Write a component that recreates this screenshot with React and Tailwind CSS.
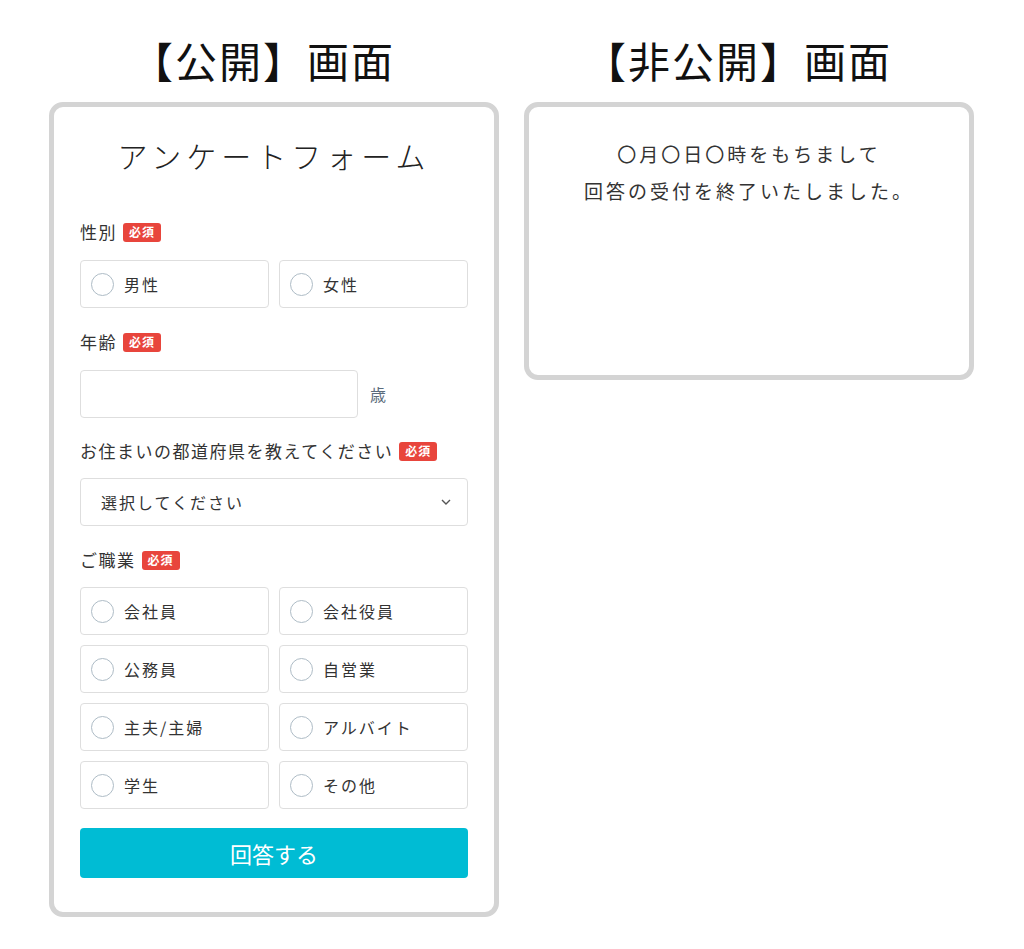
const font = { fontFamily: '"Noto Sans CJK JP", "Noto Sans", sans-serif' };

const Badge = () => (
  <span className="ml-[6px] inline-flex h-[19px] items-center rounded-[3px] bg-[#e8453c] px-[6px] text-[12px] font-bold leading-none tracking-[1px] text-white">
    必須
  </span>
);

const Label = ({ children, className = '' }) => (
  <div className={`flex h-[20px] items-center text-[17px] tracking-[1.5px] text-[#333] ${className}`}>
    {children}
    <Badge />
  </div>
);

const Radio = ({ label }) => (
  <label className="flex h-[48px] items-center gap-[10px] rounded-[4px] border border-[#dedede] bg-white pl-[10px]">
    <span className="h-[23px] w-[23px] shrink-0 rounded-full border-[1.5px] border-[#aebcc6]" />
    <span className="text-[16px] tracking-[2px] text-[#333]">{label}</span>
  </label>
);

const jobs = ['会社員', '会社役員', '公務員', '自営業', '主夫/主婦', 'アルバイト', '学生', 'その他'];

export default function App() {
  return (
    <div className="min-h-screen bg-white" style={font}>
      <div className="flex gap-[25px] pl-[49px] pt-[36px]">
        {/* public */}
        <div className="w-[450px]">
          <h1 className="mb-[18px] pr-[22px] text-center text-[42px] font-normal leading-[48px] tracking-[2px] text-[#111]">【公開】画面</h1>
          <div className="rounded-[14px] border-[5px] border-[#d4d4d4] px-[26px] pb-[34px] pt-[28px]">
            <h2 className="text-center text-[30px] font-light leading-[40px] tracking-[5px] text-[#222]">アンケートフォーム</h2>

            <Label className="mt-[47px]">性別</Label>
            <div className="mt-[18px] grid grid-cols-2 gap-[10px]">
              <Radio label="男性" />
              <Radio label="女性" />
            </div>

            <Label className="mt-[24px]">年齢</Label>
            <div className="mt-[18px] flex items-center gap-[12px]">
              <div className="h-[48px] w-[278px] rounded-[4px] border border-[#dedede]" />
              <span className="text-[16px] text-[#5b6b7b]">歳</span>
            </div>

            <Label className="mt-[23px]">お住まいの都道府県を教えてください</Label>
            <div className="mt-[17px] flex h-[48px] items-center justify-between rounded-[4px] border border-[#dedede] pl-[20px] pr-[16px]">
              <span className="text-[16px] tracking-[2px] text-[#333]">選択してください</span>
              <svg width="10" height="6" viewBox="0 0 10 6" fill="none" stroke="#555" strokeWidth="1.4">
                <path d="M1 1l4 4 4-4" />
              </svg>
            </div>

            <Label className="mt-[24px]">ご職業</Label>
            <div className="mt-[17px] grid grid-cols-2 gap-x-[10px] gap-y-[10px]">
              {jobs.map((j) => (
                <Radio key={j} label={j} />
              ))}
            </div>

            <button className="mt-[19px] h-[50px] w-full rounded-[4px] bg-[#00bcd4] text-[22px] text-white">回答する</button>
          </div>
        </div>

        {/* closed */}
        <div className="w-[450px]">
          <h1 className="mb-[18px] pr-[22px] text-center text-[42px] font-normal leading-[48px] tracking-[2px] text-[#111]">【非公開】画面</h1>
          <div className="h-[278px] rounded-[14px] border-[5px] border-[#d4d4d4] pt-[28px] text-center text-[19px] leading-[37px] tracking-[3px] text-[#333]">
            <p>〇月〇日〇時をもちまして</p>
            <p>回答の受付を終了いたしました。</p>
          </div>
        </div>
      </div>
    </div>
  );
}
